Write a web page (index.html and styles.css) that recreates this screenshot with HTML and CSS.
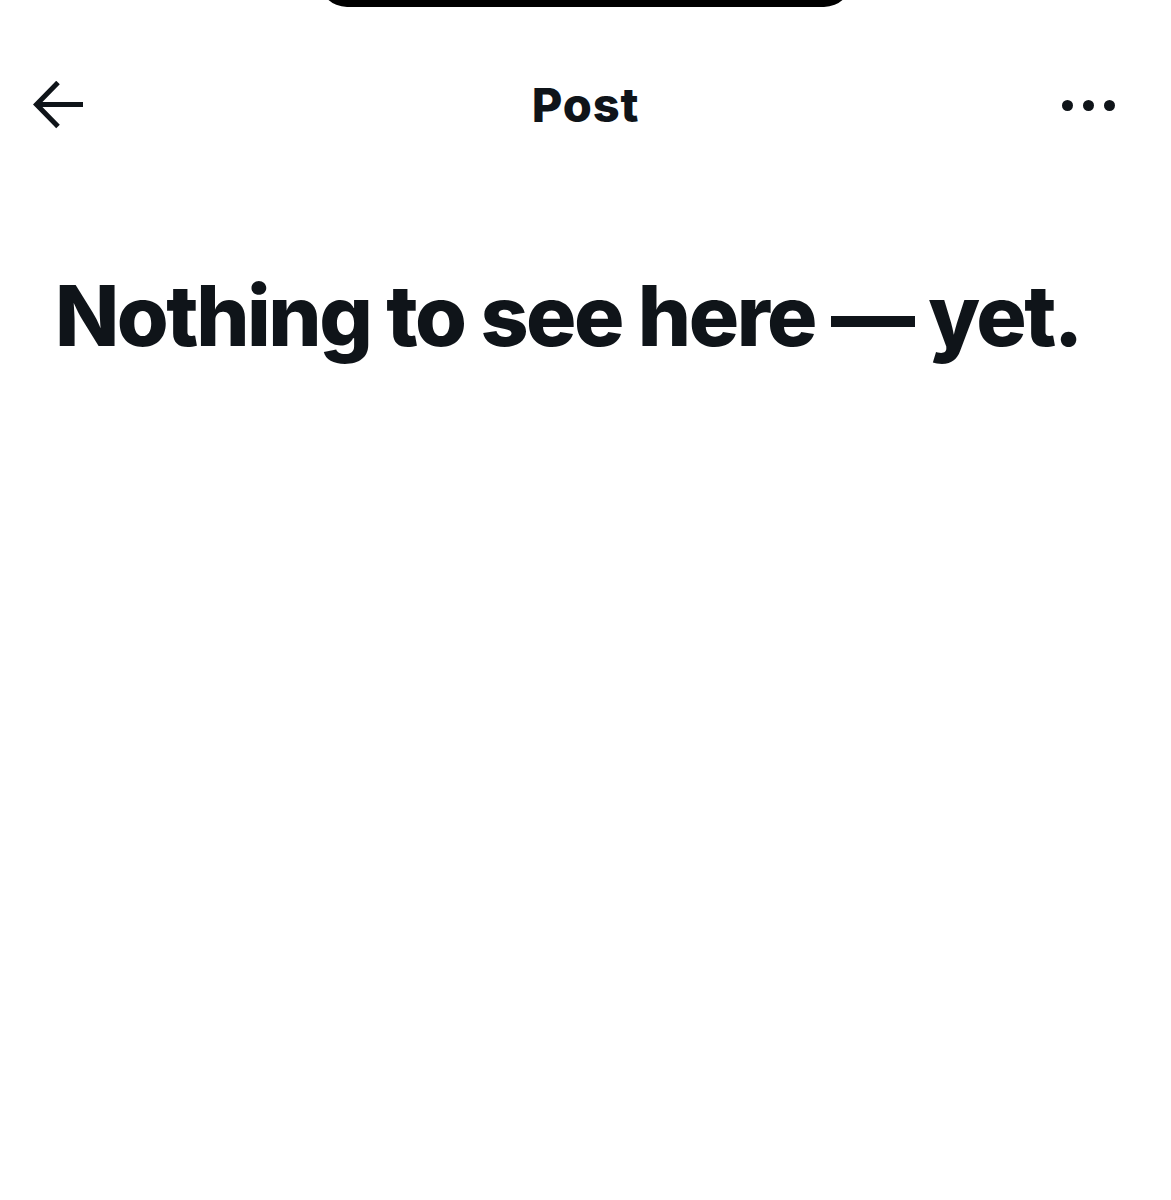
FILE: index.html
```html
<!DOCTYPE html>
<html>
<head>
<meta charset="utf-8">
<link rel="stylesheet" href="styles.css">
</head>
<body>
<div class="page">
  <div class="notch-row"><div class="notch"></div></div>
  <header class="topbar">
    <div class="back">
      <svg width="52" height="48" viewBox="0 0 52 48"><path d="M25 1.5 L3.5 23.5 L25 45.5 M4 23.5 H50" fill="none" stroke="#0f1419" stroke-width="5"/></svg>
    </div>
    <h1 class="title">Post</h1>
    <div class="more"><span class="dot"></span><span class="dot"></span><span class="dot"></span></div>
  </header>
  <main class="content">
    <h2 class="empty">Nothing to see here — yet.</h2>
  </main>
</div>
</body>
</html>
```
FILE: styles.css
```css
html, body { margin: 0; padding: 0; background: #fff; }
body { font-family: Inter, "Liberation Sans", sans-serif; color: #0f1419; }
.page { width: 1171px; height: 1200px; overflow: hidden; }
.notch-row { display: flex; justify-content: center; height: 7px; }
.notch { width: 533px; height: 40px; margin-top: -33px; background: #000; border-radius: 0 0 28px 28px; }
.topbar { display: grid; grid-template-columns: 1fr auto 1fr; align-items: center; height: 50px; margin-top: 73px; padding: 0 33px; }
.back { display: flex; }
.title { margin: 0; font-size: 47px; font-weight: 800; letter-spacing: 0.8px; line-height: 50px; }
.more { display: flex; justify-content: flex-end; gap: 10px; padding-right: 23px; }
.dot { width: 11px; height: 11px; border-radius: 50%; background: #0f1419; }
.content { padding: 0 40px 0 55px; margin-top: 136px; }
.empty { margin: 0; font-size: 84px; font-weight: 800; line-height: 100px; letter-spacing: -2.5px; white-space: nowrap; }
```
